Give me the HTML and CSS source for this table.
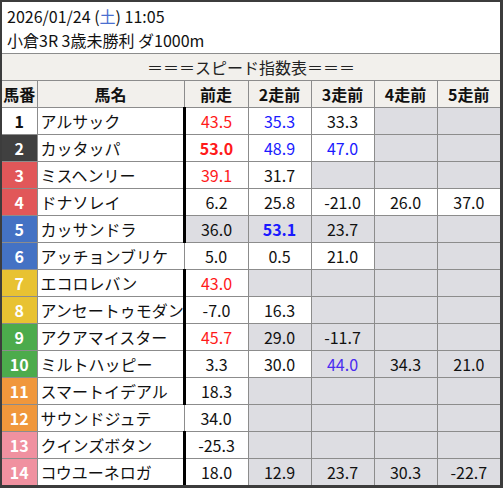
FILE: index.html
```html
<!DOCTYPE html>
<html lang="ja">
<head>
<meta charset="utf-8">
<title>スピード指数表</title>
<link rel="stylesheet" href="styles.css">
</head>
<body>
<div class="frame">
  <div class="info">
    <div class="info-line">2026/01/24 (<span class="sat">土</span>) 11:05</div>
    <div class="info-line">小倉3R 3歳未勝利 ダ1000m</div>
  </div>
  <table class="speed">
    <colgroup>
      <col class="c-no"><col class="c-name"><col class="c-last"><col class="c-run"><col class="c-run"><col class="c-run"><col class="c-run">
    </colgroup>
    <thead>
      <tr class="title-row"><th colspan="7">＝＝＝スピード指数表＝＝＝</th></tr>
      <tr class="head-row"><th>馬番</th><th>馬名</th><th>前走</th><th>2走前</th><th>3走前</th><th>4走前</th><th>5走前</th></tr>
    </thead>
    <tbody>
      <tr><td class="no w1">1</td><td class="name">アルサック</td><td class="v sep red">43.5</td><td class="v blue">35.3</td><td class="v">33.3</td><td class="v e"></td><td class="v e"></td></tr>
      <tr><td class="no w2">2</td><td class="name">カッタッパ</td><td class="v sep red b">53.0</td><td class="v blue">48.9</td><td class="v blue">47.0</td><td class="v e"></td><td class="v e"></td></tr>
      <tr><td class="no w3">3</td><td class="name">ミスヘンリー</td><td class="v sep red">39.1</td><td class="v">31.7</td><td class="v e"></td><td class="v e"></td><td class="v e"></td></tr>
      <tr><td class="no w3">4</td><td class="name">ドナソレイ</td><td class="v sep">6.2</td><td class="v">25.8</td><td class="v">-21.0</td><td class="v">26.0</td><td class="v">37.0</td></tr>
      <tr><td class="no w5">5</td><td class="name">カッサンドラ</td><td class="v sep e">36.0</td><td class="v e blue b">53.1</td><td class="v e">23.7</td><td class="v e"></td><td class="v e"></td></tr>
      <tr><td class="no w5">6</td><td class="name">アッチョンブリケ</td><td class="v">5.0</td><td class="v">0.5</td><td class="v">21.0</td><td class="v e"></td><td class="v e"></td></tr>
      <tr><td class="no w7">7</td><td class="name">エコロレバン</td><td class="v sep red">43.0</td><td class="v e"></td><td class="v e"></td><td class="v e"></td><td class="v e"></td></tr>
      <tr><td class="no w7">8</td><td class="name">アンセートゥモダン</td><td class="v sep">-7.0</td><td class="v">16.3</td><td class="v e"></td><td class="v e"></td><td class="v e"></td></tr>
      <tr><td class="no w9">9</td><td class="name">アクアマイスター</td><td class="v sep red">45.7</td><td class="v e">29.0</td><td class="v e">-11.7</td><td class="v e"></td><td class="v e"></td></tr>
      <tr><td class="no w9">10</td><td class="name">ミルトハッピー</td><td class="v sep">3.3</td><td class="v">30.0</td><td class="v e violet">44.0</td><td class="v e">34.3</td><td class="v e">21.0</td></tr>
      <tr><td class="no w11">11</td><td class="name">スマートイデアル</td><td class="v sep">18.3</td><td class="v e"></td><td class="v e"></td><td class="v e"></td><td class="v e"></td></tr>
      <tr><td class="no w11">12</td><td class="name">サウンドジュテ</td><td class="v">34.0</td><td class="v e"></td><td class="v e"></td><td class="v e"></td><td class="v e"></td></tr>
      <tr><td class="no w13">13</td><td class="name">クインズボタン</td><td class="v sep">-25.3</td><td class="v e"></td><td class="v e"></td><td class="v e"></td><td class="v e"></td></tr>
      <tr><td class="no w13">14</td><td class="name">コウユーネロガ</td><td class="v sep">18.0</td><td class="v e">12.9</td><td class="v e">23.7</td><td class="v e">30.3</td><td class="v e">-22.7</td></tr>
    </tbody>
  </table>
</div>
</body>
</html>
```

FILE: styles.css
```css
html, body {
  margin: 0;
  padding: 0;
  background: #ffffff;
}

body {
  font-family: "Noto Sans CJK JP", "Noto Sans", sans-serif;
  color: #111111;
}

.frame {
  width: 498px;
  border-style: solid;
  border-color: #3c3c3c;
  border-width: 2px 3px 3px 2px;
  background: #ffffff;
}

.info {
  padding: 2px 4px 1px 5px;
  border-bottom: 1px solid #8c8c8c;
}

.info-line {
  font-size: 16px;
  line-height: 24px;
  white-space: nowrap;
}

.sat {
  color: #4a6fd0;
}

.speed {
  width: 498px;
  table-layout: fixed;
  border-collapse: collapse;
  border-style: hidden;
  font-size: 16px;
}

.c-no { width: 35px; }
.c-name { width: 147px; }
.c-last { width: 64px; }
.c-run { width: 63px; }

.speed th,
.speed td {
  height: 26px;
  padding: 0;
  border: 1px solid #8c8c8c;
  line-height: 20px;
  white-space: nowrap;
  overflow: hidden;
}

.title-row th {
  background: #f2f0ec;
  font-weight: normal;
  text-align: center;
  color: #222222;
}

.head-row th {
  background: #f2f0ec;
  font-weight: bold;
  text-align: center;
  color: #111111;
}

.speed td.no {
  text-align: center;
  font-weight: bold;
  color: #ffffff;
}

.w1 { background: #ffffff; color: #111111 !important; }
.w2 { background: #404040; }
.w3 { background: #e15759; }
.w5 { background: #4472c4; }
.w7 { background: #e8c232; }
.w9 { background: #4cab4c; }
.w11 { background: #f0973c; }
.w13 { background: #f091a0; }

.speed td.name {
  text-align: left;
  padding-left: 3px;
  background: #ffffff;
}

.speed td.v {
  text-align: center;
  background: #ffffff;
}

.speed td.e {
  background: #dddde2;
}

.speed td.sep {
  border-left: 3px solid #000000;
}

.red { color: #ff1a1a; }
.blue { color: #1a1aff; }
.violet { color: #4a2cf0; }
.b { font-weight: bold; }
```
